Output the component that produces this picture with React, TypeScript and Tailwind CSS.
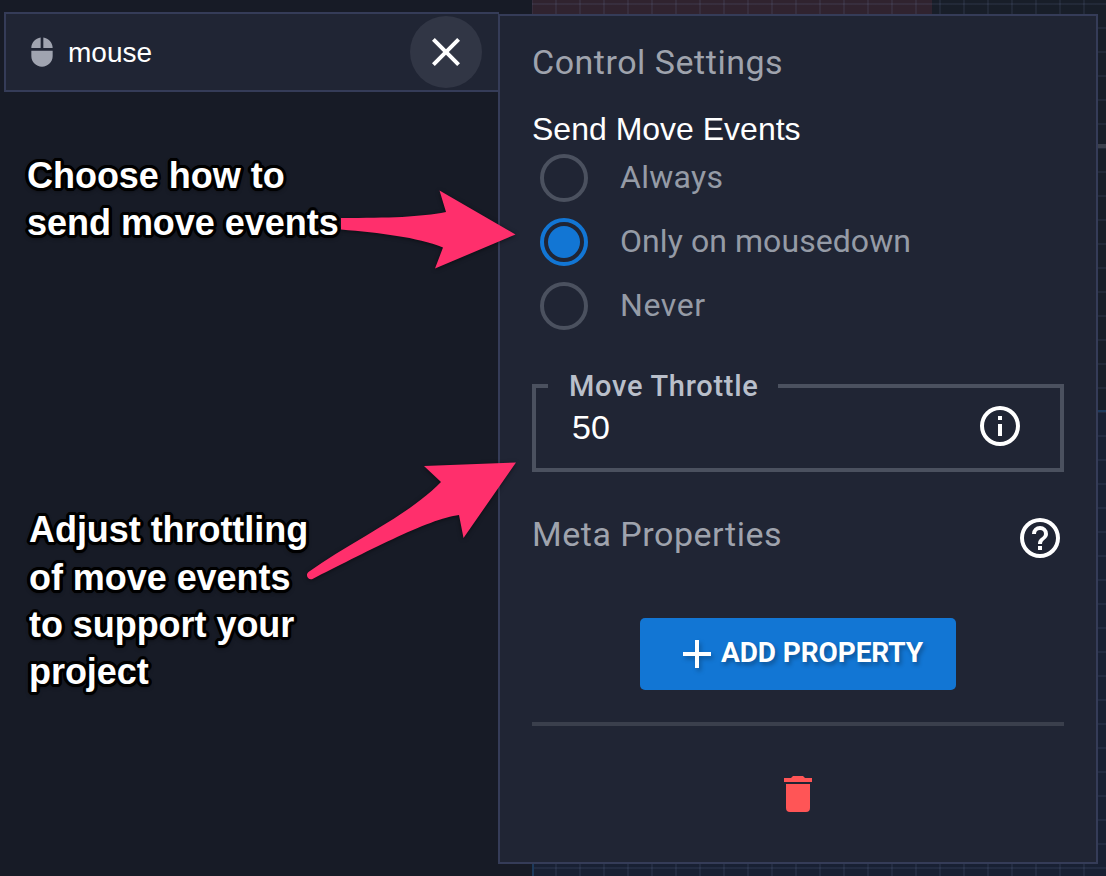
import React from "react";

const ICONS = {
  mouse:
    "M11 1.07C7.05 1.56 4 4.92 4 9h7V1.07zM4 15c0 4.42 3.58 8 8 8s8-3.58 8-8v-4H4v4zM13 1.07V9h7c0-4.08-3.05-7.44-7-7.93z",
  close:
    "M19,6.41L17.59,5L12,10.59L6.41,5L5,6.41L10.59,12L5,17.59L6.41,19L12,13.41L17.59,19L19,17.59L13.41,12L19,6.41Z",
  info: "M11,9H13V7H11M12,20C7.59,20 4,16.41 4,12C4,7.59 7.59,4 12,4C16.41,4 20,7.59 20,12C20,16.41 16.41,20 12,20M12,2A10,10 0 0,0 2,12A10,10 0 0,0 12,22A10,10 0 0,0 22,12A10,10 0 0,0 12,2M11,17H13V11H11V17Z",
  help: "M11,18H13V16H11V18M12,2A10,10 0 0,0 2,12A10,10 0 0,0 12,22A10,10 0 0,0 22,12A10,10 0 0,0 12,2M12,20C7.59,20 4,16.41 4,12C4,7.59 7.59,4 12,4C16.41,4 20,7.59 20,12C20,16.41 16.41,20 12,20M12,6A4,4 0 0,0 8,10H10A2,2 0 0,1 12,8A2,2 0 0,1 14,10C14,12 11,11.75 11,15H13C13,12.75 16,12.5 16,10A4,4 0 0,0 12,6Z",
  plus: "M19,13H13V19H11V13H5V11H11V5H13V11H19V13Z",
  trash:
    "M19,4H15.5L14.5,3H9.5L8.5,4H5V6H19M6,19A2,2 0 0,0 8,21H16A2,2 0 0,0 18,19V7H6V19Z",
};

function Icon({ name, className }: { name: keyof typeof ICONS; className: string }) {
  return (
    <svg viewBox="0 0 24 24" fill="currentColor" className={`shrink-0 ${className}`}>
      <path d={ICONS[name]} />
    </svg>
  );
}

function CanvasGrid() {
  return (
    <div className="absolute inset-y-0 left-[532px] right-0 bg-[#181e29]">
      <div className="absolute inset-x-0 bottom-0 top-[411px] bg-[#182033]" />
      <div className="absolute left-0 top-0 h-[14px] w-[400px] bg-[#30232f]" />
      <div className="absolute inset-0 bg-[linear-gradient(to_right,#8296c818_1px,transparent_1px,transparent_23px,#8296c818_23px),linear-gradient(to_bottom,#8296c818_1px,transparent_1px,transparent_23px,#8296c818_23px)] bg-[length:24px_24px] bg-[position:0_4px]" />
      <div className="absolute inset-x-0 top-[144px] h-[4px] bg-[#3b404c]" />
      <div className="absolute inset-x-0 top-[410px] h-[2px] bg-[#1d3a5c]" />
      <div className="absolute bottom-0 left-0 top-[411px] w-[2px] bg-[#1d3a5c]" />
    </div>
  );
}

function Radio({
  label,
  checked,
  spacing,
}: {
  label: string;
  checked?: boolean;
  spacing: string;
}) {
  return (
    <div className="flex h-16 items-center pl-2">
      <span
        className={`flex size-12 items-center justify-center rounded-full border-4 ${
          checked ? "border-[#1276d4]" : "border-[#4b515f]"
        }`}
      >
        {checked && <span className="size-8 rounded-full bg-[#1276d4]" />}
      </span>
      <span className={`ml-8 -mt-0.5 whitespace-nowrap text-[32px] leading-none text-[#959ba6] ${spacing}`}>
        {label}
      </span>
    </div>
  );
}

function Note({ lines, className }: { lines: string[]; className: string }) {
  return (
    <div
      className={`whitespace-nowrap font-['Liberation_Sans',Arial,sans-serif] text-[36px] font-bold leading-[47.2px] text-white [text-shadow:3.2px_0_#000,2.96px_1.22px_#000,2.26px_2.26px_#000,1.22px_2.96px_#000,0_3.2px_#000,-1.22px_2.96px_#000,-2.26px_2.26px_#000,-2.96px_1.22px_#000,-3.2px_0_#000,-2.96px_-1.22px_#000,-2.26px_-2.26px_#000,-1.22px_-2.96px_#000,0_-3.2px_#000,1.22px_-2.96px_#000,2.26px_-2.26px_#000,2.96px_-1.22px_#000,0_2px_5px_#000] ${className}`}
    >
      {lines.map((line) => (
        <div key={line}>{line}</div>
      ))}
    </div>
  );
}

export default function App() {
  return (
    <div className="relative flex h-[876px] w-[1106px] overflow-hidden bg-[#171b26] font-['Roboto',sans-serif]">
      <CanvasGrid />

      <aside className="relative w-[498px] shrink-0 pl-1 pt-3">
        <div className="flex h-20 w-[495px] items-center border-2 border-r-0 border-[#353c58] bg-[#202534] pl-5">
          <Icon name="mouse" className="size-8 text-[#a0a4b0]" />
          <span className="ml-2.5 mt-0.5 font-['Liberation_Sans',Arial,sans-serif] text-[28px] leading-none text-white">
            mouse
          </span>
          <button className="ml-auto mr-[17px] flex size-[72px] items-center justify-center rounded-full bg-[#313645] text-white">
            <Icon name="close" className="size-12" />
          </button>
        </div>
        <Note className="ml-[23px] mt-[60px] tracking-[-0.03px]" lines={["Choose how to", "send move events"]} />
        <Note
          className="ml-[25px] mt-[260px] tracking-[-0.05px]"
          lines={["Adjust throttling", "of move events", "to support your", "project"]}
        />
      </aside>

      <main className="relative mt-[14px] h-[850px] w-[600px] border-2 border-[#353c58] bg-[#202534] px-8">
        <h1 className="h-[92px] whitespace-nowrap text-[34px] leading-[92px] tracking-[0.52px] text-[#9fa3ad]">
          Control Settings
        </h1>
        <h2 className="h-[38px] whitespace-nowrap font-['Liberation_Sans',Arial,sans-serif] text-[32px] leading-[42px] text-white">
          Send Move Events
        </h2>
        <Radio label="Always" spacing="tracking-[0.3px]" />
        <Radio label="Only on mousedown" checked spacing="tracking-[0.07px]" />
        <Radio label="Never" spacing="tracking-[0.6px]" />

        <div className="relative mt-[46px] flex h-[88px] items-center justify-between border-4 border-[#4b515f] pl-9 pr-9">
          <span className="absolute -top-5 left-3 flex h-9 w-[230px] items-center whitespace-nowrap bg-[#202534] pl-[21px] text-[29px] font-medium leading-none tracking-[0.72px] text-[#b9bfca]">
            Move Throttle
          </span>
          <span className="-mt-[3px] font-['Liberation_Sans',Arial,sans-serif] text-[34px] leading-none text-white">
            50
          </span>
          <Icon name="info" className="-mt-1 size-12 text-white" />
        </div>

        <div className="mt-[42px] flex h-12 items-center justify-between">
          <h1 className="-mt-2 whitespace-nowrap text-[34px] leading-none tracking-[0.52px] text-[#9fa3ad]">
            Meta Properties
          </h1>
          <Icon name="help" className="size-12 text-white" />
        </div>

        <button className="mx-auto mt-14 flex h-[72px] w-[316px] items-center rounded-[5px] bg-[#1276d4] pl-[33px] text-white">
          <Icon name="plus" className="size-12 drop-shadow-[2px_3px_2px_rgba(0,0,0,0.25)]" />
          <span className="-mt-0.5 whitespace-nowrap text-[28px] font-bold leading-none tracking-[-0.1px] [text-shadow:2px_3px_4px_rgba(0,0,0,0.3)]">
            ADD PROPERTY
          </span>
        </button>

        <div className="mt-8 h-1 bg-[#3a3f4c]" />
        <Icon name="trash" className="mx-auto mt-11 size-12 text-[#ff5556]" />
      </main>

      <svg
        viewBox="0 0 530 876"
        className="pointer-events-none absolute left-0 top-0 h-[876px] w-[530px] fill-[#ff2f6c] drop-shadow-[0_1px_2px_rgba(0,0,0,0.5)]"
      >
        <path d="M341 218C390 218 420 217 446 212L439.500 190.500L515.500 234.500L435 268.500L443 247.500C417 237 380 233 341 229.500Z" />
        <path d="M308.500 572C350 542 408 516 441 482L424 466L516 462.500L463.500 538L459 515C430 518 360 555 312.500 579C308 580.500 305 575 308.500 572Z" />
      </svg>
    </div>
  );
}
